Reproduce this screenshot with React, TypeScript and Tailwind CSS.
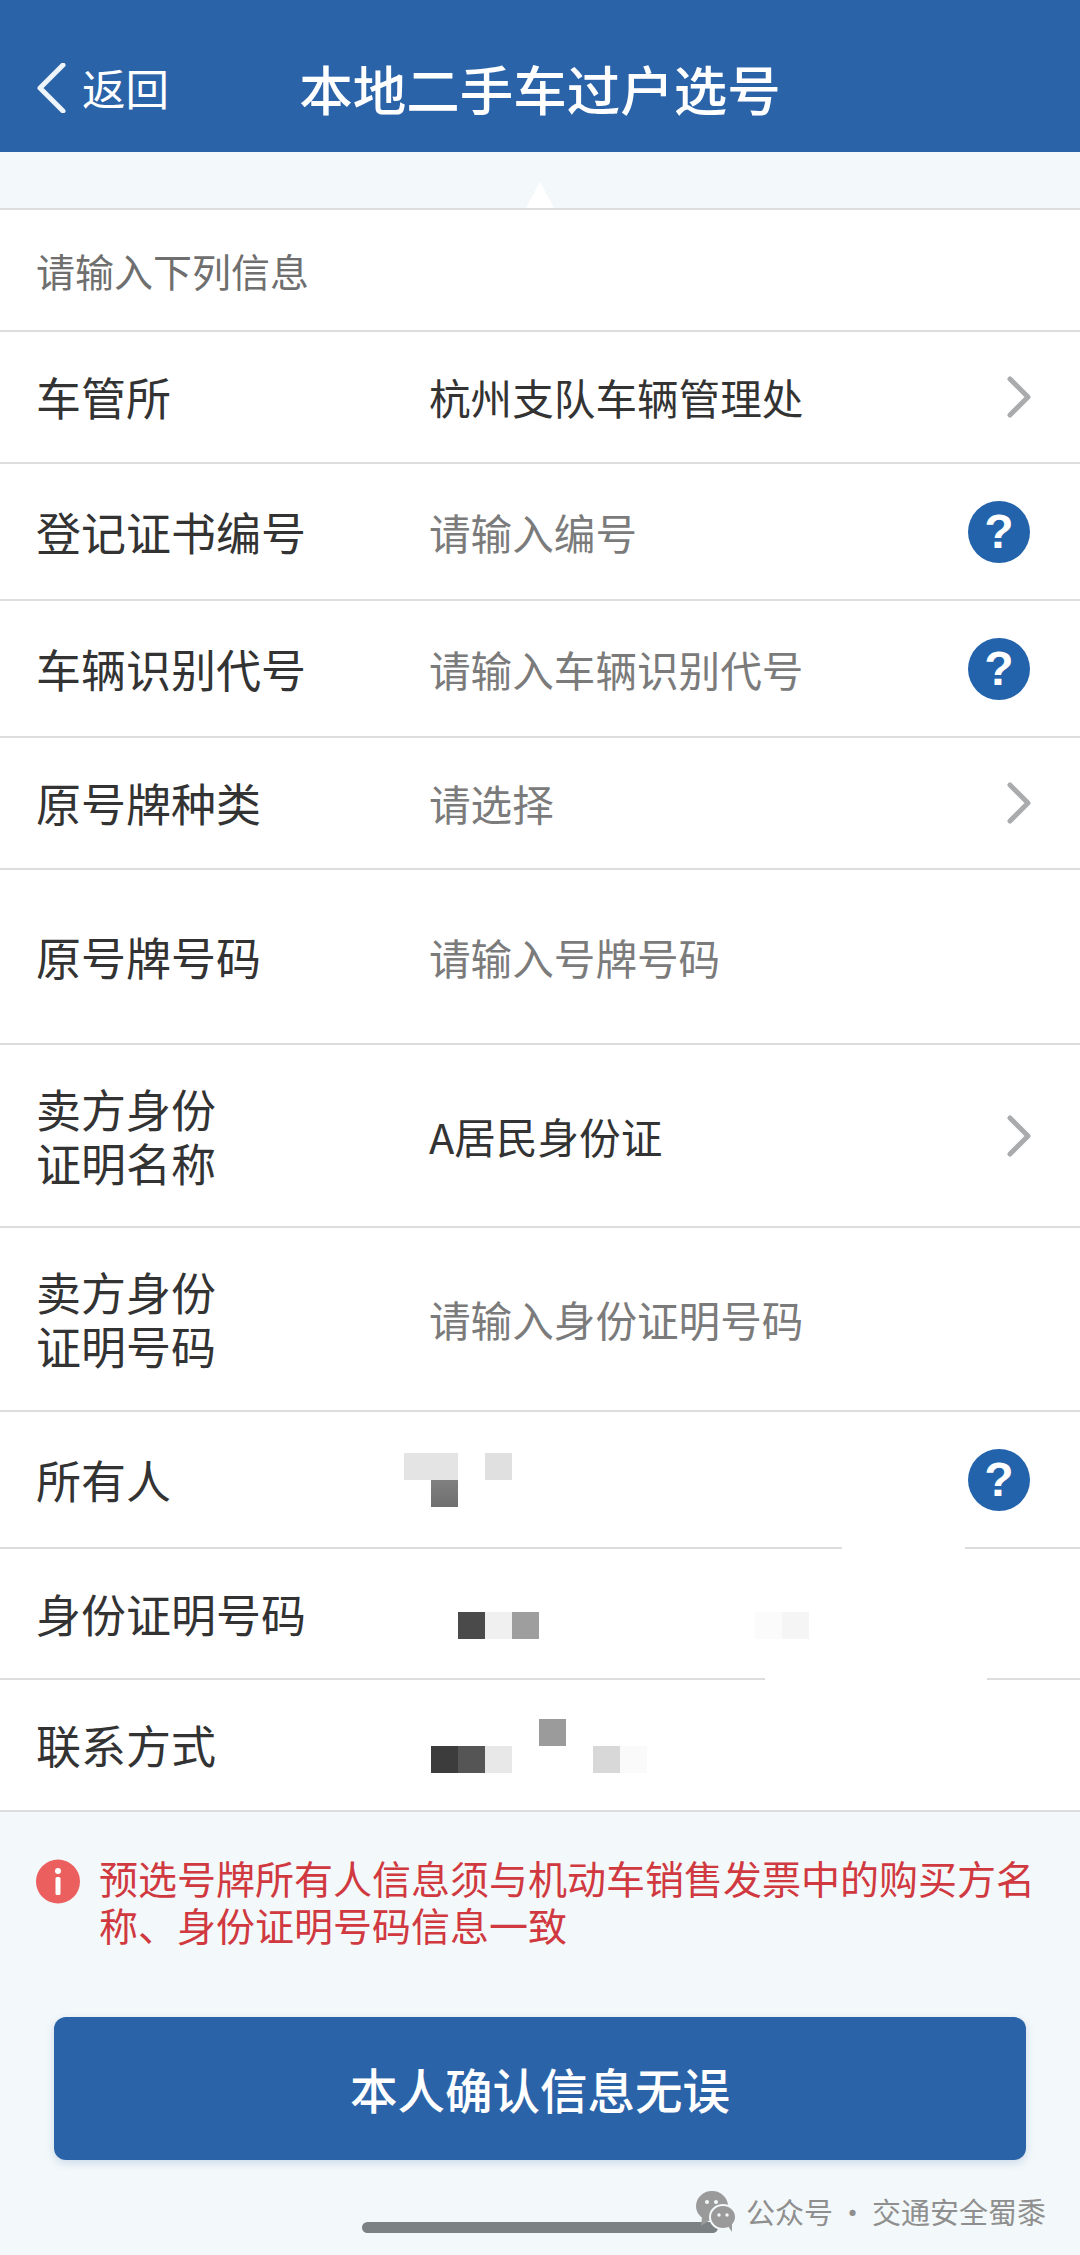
const CJK = "font-['Noto_Sans_CJK_SC','Noto_Sans',sans-serif]";

function ChevronRight() {
  return (
    <svg className="h-[42px] w-[26px] shrink-0 translate-x-[1px]" viewBox="0 0 26 42" fill="none">
      <path d="M5 3 L23 21 L5 39" stroke="#a9abad" strokeWidth="5" strokeLinecap="round" strokeLinejoin="round" />
    </svg>
  );
}

function HelpIcon() {
  return (
    <span className="flex h-[62px] w-[62px] shrink-0 items-center justify-center rounded-full bg-[#2263ab] font-['Liberation_Sans',sans-serif] text-[48px] leading-none font-bold text-white">
      ?
    </span>
  );
}

function Divider({ gapStart, gapWidth }: { gapStart?: number; gapWidth?: number }) {
  if (gapStart === undefined) return <div className="h-[2px] shrink-0 bg-[#dcdddf]" />;
  return (
    <div className="flex h-[2px] shrink-0 bg-[#dcdddf]">
      <div style={{ marginLeft: gapStart, width: gapWidth }} className="h-full bg-white" />
    </div>
  );
}

type RowProps = {
  heightClass: string;
  label: React.ReactNode;
  value?: React.ReactNode;
  placeholder?: boolean;
  right?: React.ReactNode;
  narrowLabel?: boolean;
};

function Row({ heightClass, label, value, placeholder, right, narrowLabel }: RowProps) {
  return (
    <div className={`flex items-center bg-white pr-[50px] pl-[36px] ${heightClass}`}>
      <div className={`shrink-0 text-[45px] leading-[54px] text-[#333333] ${narrowLabel ? "w-[368px]" : "w-[393px]"}`}>
        {label}
      </div>
      <div className={`min-w-0 flex-1 text-[41.6px] leading-[54px] ${placeholder ? "text-[#7b7b7b]" : "text-[#333333]"}`}>
        {value}
      </div>
      {right}
    </div>
  );
}

// blurred privacy blocks, each line is a row of 27px cells
function Mosaic({ rows, className }: { rows: string[][]; className?: string }) {
  return (
    <div className={`flex flex-col ${className ?? ""}`}>
      {rows.map((cells, i) => (
        <div key={i} className="flex">
          {cells.map((c, j) => (
            <div key={j} className={`h-[27px] w-[27px] ${c}`} />
          ))}
        </div>
      ))}
    </div>
  );
}

const e = "";

export default function App() {
  return (
    <div className={`relative flex h-[2255px] w-[1080px] flex-col overflow-hidden bg-[#f3f8fa] ${CJK}`}>
      {/* Header */}
      <div className="grid h-[152px] shrink-0 grid-cols-[1fr_auto_1fr] items-center bg-[#2b63a9] pt-[23px] text-white">
        <div className="flex items-center pl-[36px]">
          <svg className="h-[50px] w-[30px]" viewBox="0 0 30 50" fill="none">
            <path d="M27 2 L4 25 L27 48" stroke="#eef6fb" strokeWidth="5" strokeLinecap="round" strokeLinejoin="round" />
          </svg>
          <span className="ml-[16px] text-[43.5px] leading-none">返回</span>
        </div>
        <div className="text-[53.5px] leading-none font-medium">本地二手车过户选号</div>
        <div />
      </div>

      {/* Pointer above the card */}
      <div className="flex h-[56px] shrink-0 items-end justify-center">
        <div className="h-0 w-0 border-x-[14px] border-b-[26px] border-x-transparent border-b-white" />
      </div>
      <Divider />

      <div className="flex h-[120px] shrink-0 items-center bg-white pl-[36px] text-[39px] text-[#6f6f6f]">请输入下列信息</div>
      <Divider />
      <Row heightClass="h-[130px]" label="车管所" value="杭州支队车辆管理处" right={<ChevronRight />} />
      <Divider />
      <Row heightClass="h-[135px]" label="登记证书编号" value="请输入编号" placeholder right={<HelpIcon />} />
      <Divider />
      <Row heightClass="h-[135px]" label="车辆识别代号" value="请输入车辆识别代号" placeholder right={<HelpIcon />} />
      <Divider />
      <Row heightClass="h-[130px]" label="原号牌种类" value="请选择" placeholder right={<ChevronRight />} />
      <Divider />
      <Row heightClass="h-[173px]" label="原号牌号码" value="请输入号牌号码" placeholder />
      <Divider />
      <Row
        heightClass="h-[181px]"
        label={<>卖方身份<br />证明名称</>}
        value="A居民身份证"
        right={<ChevronRight />}
      />
      <Divider />
      <Row
        heightClass="h-[182px]"
        label={<>卖方身份<br />证明号码</>}
        value="请输入身份证明号码"
        placeholder
      />
      <Divider />
      <Row
        heightClass="h-[135px]"
        narrowLabel
        label="所有人"
        value={
          <Mosaic
            rows={[
              ["bg-[#e4e4e4]", "bg-[#e4e4e4]", e, "bg-[#e0e0e0]"],
              [e, "bg-gradient-to-b from-[#808080] to-[#6f6f6f]"],
            ]}
          />
        }
        right={<HelpIcon />}
      />
      <Divider gapStart={842} gapWidth={123} />
      <Row
        heightClass="h-[129px]"
        narrowLabel
        label="身份证明号码"
        value={
          <Mosaic
            className="mt-[24px]"
            rows={[
              [e, e, "bg-[#4a4a4a]", "bg-[#f0f0f0]", "bg-[#9e9e9e]", e, e, e, e, e, e, e, e, "bg-[#fbfbfb]", "bg-[#f5f5f5]"],
            ]}
          />
        }
      />
      <Divider gapStart={765} gapWidth={222} />
      <Row
        heightClass="h-[130px]"
        narrowLabel
        label="联系方式"
        value={
          <Mosaic
            className="mt-[2px]"
            rows={[
              [e, e, e, e, e, "bg-[#9b9b9b]"],
              [e, "bg-[#3c3c3c]", "bg-[#555555]", "bg-[#e8e8e8]", e, e, e, "bg-[#d8d8d8]", "bg-[#fafafa]"],
            ]}
          />
        }
      />
      <Divider />

      {/* Warning */}
      <div className="mt-[42px] flex items-start pr-[44px] pl-[36px]">
        <svg className="mt-[5px] h-[45px] w-[44px] shrink-0" viewBox="0 0 44 45">
          <circle cx="22" cy="22.5" r="22" fill="#ec5f5f" />
          <circle cx="22" cy="12" r="3" fill="#ffffff" />
          <rect x="19.5" y="18" width="5" height="18" rx="1.5" fill="#ffffff" />
        </svg>
        <p className="ml-[19px] text-[39px] leading-[47px] text-[#d0393f]">
          预选号牌所有人信息须与机动车销售发票中的购买方名称、身份证明号码信息一致
        </p>
      </div>

      {/* Confirm button */}
      <div className="mt-[69px] px-[54px]">
        <div className="flex h-[143px] items-center justify-center rounded-[12px] bg-[#2b63a9] text-[47.5px] font-medium text-white shadow-[0_3px_8px_rgba(43,99,169,0.2)]">
          本人确认信息无误
        </div>
      </div>

      {/* Home indicator */}
      <div className="mt-[62px] flex justify-center">
        <div className="h-[11px] w-[356px] rounded-full bg-[#7c8184]" />
      </div>

      {/* WeChat watermark over the page */}
      <div className="absolute top-[2189px] left-[695px] flex items-center text-[#8f8f8f]">
        <svg className="h-[44px] w-[42px]" viewBox="0 0 42 44">
          <ellipse cx="17" cy="17" rx="16" ry="15" fill="#9a9a9a" />
          <path d="M7 28 L6 37 L15 31 Z" fill="#9a9a9a" />
          <ellipse cx="28" cy="28" rx="13" ry="12" fill="#9a9a9a" stroke="#f3f8fa" strokeWidth="2" />
          <path d="M33 37 L37 43 L37 34 Z" fill="#9a9a9a" />
          <circle cx="12" cy="13" r="2" fill="#f3f8fa" />
          <circle cx="21" cy="13" r="2" fill="#f3f8fa" />
          <circle cx="24" cy="26" r="1.7" fill="#f3f8fa" />
          <circle cx="32" cy="26" r="1.7" fill="#f3f8fa" />
        </svg>
        <span className="ml-[9px] flex items-center text-[29px] leading-none">
          公众号<span className="mx-[5px]">·</span>交通安全蜀黍
        </span>
      </div>
    </div>
  );
}
